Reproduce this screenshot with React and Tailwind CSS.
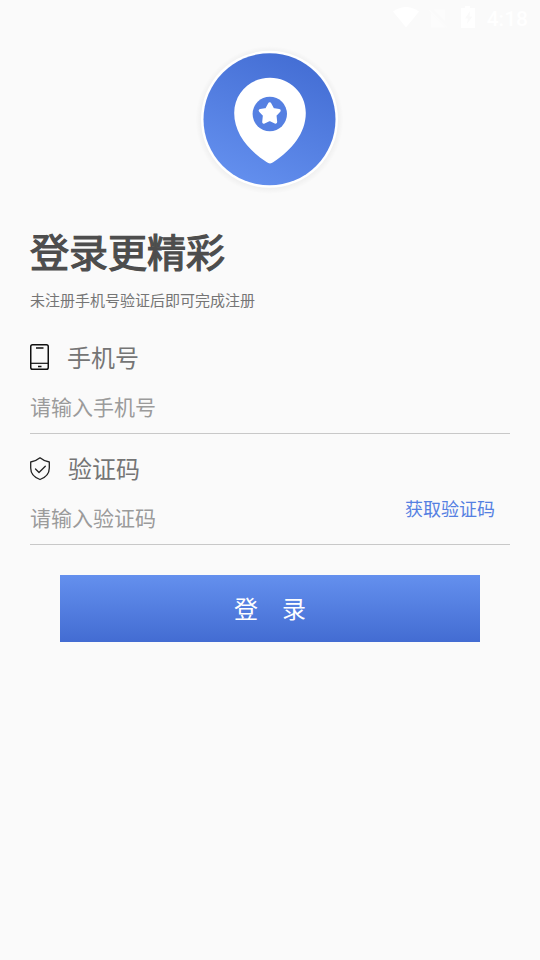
function StatusBar() {
  return (
    <header className="flex h-9 items-center justify-end pr-3 text-white">
      <svg className="h-9 w-[100px]" viewBox="0 0 100 36" fill="currentColor">
        <path d="M0 11.5 Q13 2.500 26 11.5 L13 27.5 Z" />
        <path d="M38 13 L52.500 27.500 H38 Z M40 9.500 H52 V21.500 Z M35.500 10.500 L36.700 9.500 L54.500 27 L53.500 28 Z" opacity="0.35" />
        <path
          fillRule="evenodd"
          d="M68 8 H72 V6 H77 V8 H82 V28 H68 V8 Z M77 11 L72 18.500 H75 L74 24 L79.500 16.500 H76.500 Z"
        />
      </svg>
      <span className="ml-[-6px] pt-0.5 font-['Roboto',sans-serif] text-[21px] leading-9 font-medium">4:18</span>
    </header>
  );
}

function Logo() {
  return (
    <svg className="mx-auto mt-1 block size-[160px]" viewBox="0 0 160 160">
      <defs>
        <linearGradient id="disc" x1="0.3" y1="0.95" x2="0.7" y2="0.05">
          <stop offset="0" stopColor="#628eed" />
          <stop offset="1" stopColor="#456fd5" />
        </linearGradient>
        <radialGradient id="halo">
          <stop offset="0.9" stopColor="#000" stopOpacity="0.05" />
          <stop offset="1" stopColor="#000" stopOpacity="0" />
        </radialGradient>
      </defs>
      <circle cx="79.500" cy="80" r="74" fill="url(#halo)" />
      <circle cx="79.500" cy="79.300" r="68.500" fill="#fff" />
      <circle cx="79.500" cy="79.300" r="66" fill="url(#disc)" />
      <path
        fill="#fff"
        d="M80 37.700 C60 37.700 44.200 53 44.200 73 C44.200 93 58 110 76.500 122 Q80 124.800 83.500 122 C102 110 115.800 93 115.800 73 C115.800 53 100 37.700 80 37.700 Z"
      />
      <circle cx="79.800" cy="74" r="17.200" fill="#5580e2" />
      <path
        fill="#fff"
        stroke="#fff"
        strokeWidth="3.400"
        strokeLinejoin="round"
        d="M79.700 64 L82.800 69.700 L89 70.600 L84.800 75.200 L85.500 82 L79.700 79.300 L73.900 82 L74.600 75.200 L70.400 70.600 L76.600 69.700 Z"
      />
    </svg>
  );
}

function PhoneIcon() {
  return (
    <svg className="h-[26px] w-[19px]" viewBox="0 0 19 26" fill="none" stroke="#111" strokeWidth="1.500">
      <rect x="0.750" y="0.750" width="17.500" height="24.500" rx="1.800" />
      <path d="M0.750 19.300 H18.250" strokeWidth="1.200" />
      <path d="M6 4 H13.500 M8 22.500 H11.500" />
    </svg>
  );
}

function ShieldIcon() {
  return (
    <svg
      className="mt-px h-6 w-5"
      viewBox="0 0 20 24"
      fill="none"
      stroke="#222"
      strokeWidth="1.300"
      strokeLinejoin="round"
      strokeLinecap="round"
    >
      <path d="M10 0.800 Q6 4.200 0.700 5 V11 C0.700 17 4.500 20.500 10 22.500 C15.500 20.500 19.300 17 19.300 11 V5 Q14 4.200 10 0.800 Z" />
      <path d="M5.500 12 L9 15.500 L15.300 9.300" />
    </svg>
  );
}

function Field({ icon, label, placeholder, action, className = "" }) {
  return (
    <div className={`border-b border-[#c8c8c8] ${className}`}>
      <div className="flex h-9 items-center">
        {icon}
        <span className="text-2xl leading-9 text-[#757575]">{label}</span>
      </div>
      <div className="mt-[15px] flex h-[43px] items-start">
        <input
          className="h-8 w-0 flex-1 bg-transparent text-[21px] outline-none placeholder:text-[#9b9b9b]"
          placeholder={placeholder}
        />
        {action}
      </div>
    </div>
  );
}

export default function App() {
  return (
    <div className="h-[960px] w-[540px] overflow-hidden bg-[#fafafa] font-['Noto_Sans_CJK_SC',sans-serif]">
      <StatusBar />
      <Logo />
      <main className="px-[30px] pt-[26px]">
        <h1 className="text-[39px] leading-[48px] text-[#4d4d4d] [-webkit-text-stroke:1.2px_#4d4d4d]">登录更精彩</h1>
        <p className="mt-[14px] text-[15px] leading-6 text-[#757575]">未注册手机号验证后即可完成注册</p>
        <Field
          className="mt-[27px]"
          icon={<span className="w-[37px]"><PhoneIcon /></span>}
          label="手机号"
          placeholder="请输入手机号"
        />
        <Field
          className="mt-4"
          icon={<span className="w-[38px]"><ShieldIcon /></span>}
          label="验证码"
          placeholder="请输入验证码"
          action={<button className="-mt-[5px] mr-[15px] text-lg leading-6 text-[#5580e2]">获取验证码</button>}
        />
        <button className="mx-[30px] mt-[30px] flex h-[67px] w-[420px] items-center justify-center gap-6 bg-linear-to-b from-[#6490ee] to-[#436cd2] pb-0.5 text-2xl text-white">
          <span>登</span>
          <span>录</span>
        </button>
      </main>
    </div>
  );
}
